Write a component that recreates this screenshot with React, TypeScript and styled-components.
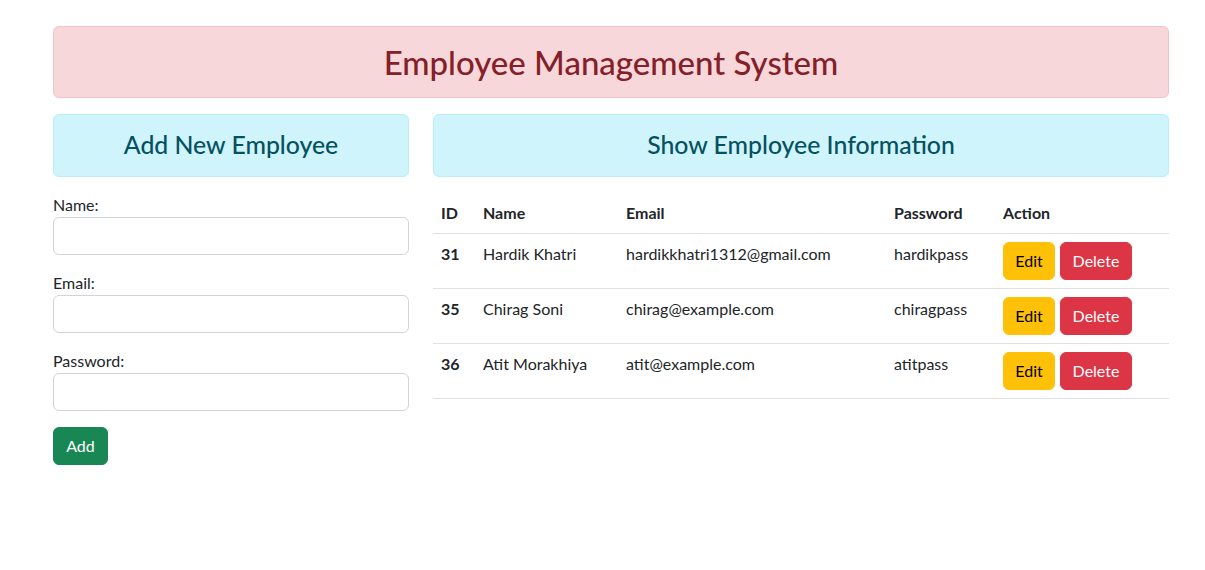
import React from "react";
import styled, { createGlobalStyle } from "styled-components";

const FONT = `"Lato", "Noto Sans", "Liberation Sans", sans-serif`;

const Global = createGlobalStyle`
  * { box-sizing: border-box; }
  html, body { margin: 0; padding: 0; background: #fff; }
  body {
    font-family: ${FONT};
    font-size: 16px;
    line-height: 1.5;
    color: #212529;
  }
`;

const Page = styled.div`
  width: 1116px;
  margin: 26px 0 0 53px;
`;

const Alert = styled.div<{ $tone: "danger" | "info" }>`
  padding: 16px;
  border-radius: 6px;
  border: 1px solid ${(p) => (p.$tone === "danger" ? "#f5c2c7" : "#b6effb")};
  background: ${(p) => (p.$tone === "danger" ? "#f8d7da" : "#cff4fc")};
  color: ${(p) => (p.$tone === "danger" ? "#842029" : "#055160")};
  text-align: center;
`;

const Title = styled.h2`
  margin: 0;
  font-size: 33px;
  font-weight: 500;
  line-height: 38.4px;
`;

const SubTitle = styled.h4`
  margin: 0;
  font-size: 24.8px;
  font-weight: 500;
  line-height: 28.8px;
`;

const Row = styled.div`
  display: grid;
  grid-template-columns: 356px 736px;
  column-gap: 24px;
  margin-top: 16px;
  align-items: start;
`;

const Column = styled.div`
  display: flex;
  flex-direction: column;
  gap: 16px;
`;

const Form = styled.form`
  display: flex;
  flex-direction: column;
  gap: 16px;
`;

const Field = styled.div`
  display: flex;
  flex-direction: column;
`;

const Label = styled.label`
  display: block;
  height: 24px;
  line-height: 24px;
`;

const Input = styled.input`
  display: block;
  width: 100%;
  height: 38px;
  padding: 6px 12px;
  font: inherit;
  border: 1px solid #ced4da;
  border-radius: 6px;
  background: #fff;
  color: #212529;
  outline: none;
`;

const Button = styled.button<{ $variant: "success" | "warning" | "danger" }>`
  display: inline-block;
  height: 38px;
  padding: 6px 12px;
  font-family: ${FONT};
  font-size: 16px;
  line-height: 24px;
  border-radius: 6px;
  cursor: pointer;
  border: 1px solid
    ${(p) =>
      p.$variant === "success" ? "#198754" : p.$variant === "warning" ? "#ffc107" : "#dc3545"};
  background: ${(p) =>
    p.$variant === "success" ? "#198754" : p.$variant === "warning" ? "#ffc107" : "#dc3545"};
  color: ${(p) => (p.$variant === "warning" ? "#000" : "#fff")};
`;

const AddButton = styled(Button)`
  align-self: flex-start;
  width: 55px;
  padding: 6px 0;
`;

const Table = styled.table`
  width: 100%;
  border-collapse: collapse;
  table-layout: fixed;
`;

const Th = styled.th<{ $w: number }>`
  width: ${(p) => p.$w}px;
  text-align: left;
  font-weight: 700;
  padding: 8px;
  line-height: 24px;
  border-bottom: 1px solid #dee2e6;
`;

const Td = styled.td<{ $bold?: boolean }>`
  padding: 8px;
  line-height: 24px;
  vertical-align: top;
  font-weight: ${(p) => (p.$bold ? 700 : 400)};
  border-bottom: 1px solid #dee2e6;
`;

const Actions = styled.div`
  display: flex;
  gap: 5px;
`;

const EditButton = styled(Button)`
  width: 52px;
  padding: 6px 0;
`;

const DeleteButton = styled(Button)`
  width: 72px;
  padding: 6px 0;
`;

const employees = [
  { id: 31, name: "Hardik Khatri", email: "hardikkhatri1312@gmail.com", password: "hardikpass" },
  { id: 35, name: "Chirag Soni", email: "chirag@example.com", password: "chiragpass" },
  { id: 36, name: "Atit Morakhiya", email: "atit@example.com", password: "atitpass" },
];

export default function App() {
  return (
    <>
      <Global />
      <Page>
        <Alert $tone="danger">
          <Title>Employee Management System</Title>
        </Alert>
        <Row>
          <Column>
            <Alert $tone="info">
              <SubTitle>Add New Employee</SubTitle>
            </Alert>
            <Form onSubmit={(e) => e.preventDefault()}>
              <Field>
                <Label htmlFor="name">Name:</Label>
                <Input id="name" type="text" />
              </Field>
              <Field>
                <Label htmlFor="email">Email:</Label>
                <Input id="email" type="email" />
              </Field>
              <Field>
                <Label htmlFor="password">Password:</Label>
                <Input id="password" type="password" />
              </Field>
              <AddButton $variant="success" type="submit">
                Add
              </AddButton>
            </Form>
          </Column>
          <Column>
            <Alert $tone="info">
              <SubTitle>Show Employee Information</SubTitle>
            </Alert>
            <Table>
              <thead>
                <tr>
                  <Th $w={42}>ID</Th>
                  <Th $w={143}>Name</Th>
                  <Th $w={268}>Email</Th>
                  <Th $w={109}>Password</Th>
                  <Th $w={174}>Action</Th>
                </tr>
              </thead>
              <tbody>
                {employees.map((e) => (
                  <tr key={e.id}>
                    <Td $bold>{e.id}</Td>
                    <Td>{e.name}</Td>
                    <Td>{e.email}</Td>
                    <Td>{e.password}</Td>
                    <Td>
                      <Actions>
                        <EditButton $variant="warning">Edit</EditButton>
                        <DeleteButton $variant="danger">Delete</DeleteButton>
                      </Actions>
                    </Td>
                  </tr>
                ))}
              </tbody>
            </Table>
          </Column>
        </Row>
      </Page>
    </>
  );
}
